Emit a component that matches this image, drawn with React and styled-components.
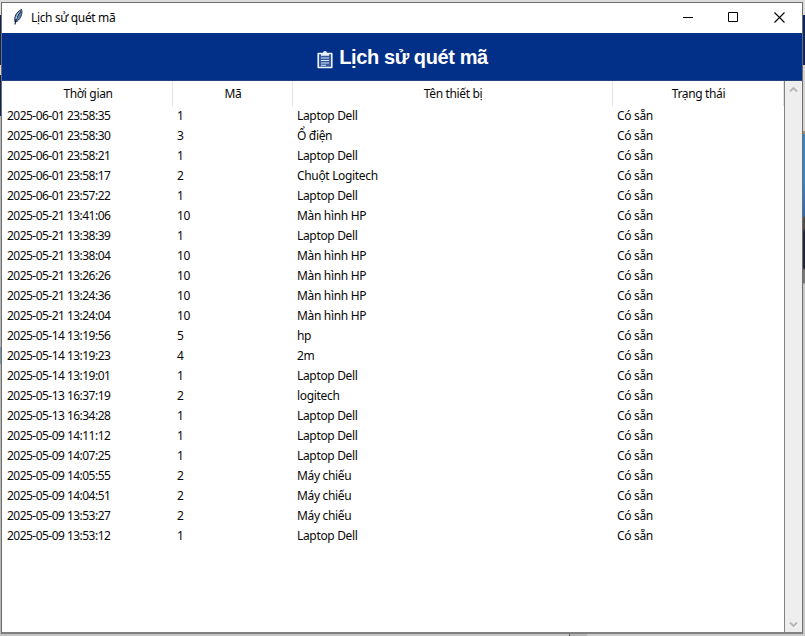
import React from 'react';
import styled, { createGlobalStyle } from 'styled-components';

const GlobalStyle = createGlobalStyle`
  * { box-sizing: border-box; }
  body { margin: 0; overflow: hidden; background: #cfcfcf; }
`;

const Desktop = styled.div`
  display: grid;
  grid-template-columns: 1px 802px 2px;
  grid-template-rows: 2px 632px 2px;
  width: 805px;
  height: 636px;
  font-family: 'Noto Sans', 'Open Sans', sans-serif;
  font-size: 12px;
  letter-spacing: -0.35px;
  color: #080808;
`;

const TopEdge = styled.div`
  grid-column: 1 / -1;
  background: #dcdcdc;
`;

const LeftEdge = styled.div`
  background: linear-gradient(#dcdcdc 0 13px, #0c2260 13px 63px, #d8d8d8 63px 73px, #0c2260 73px 114px, #b5b8bb 114px 345px, #7898aa 345px 362px, #b8b8b8 362px);
`;

const RightEdge = styled.div`
  background: linear-gradient(#dcdcdc 0 13px, #0c2668 13px 63px, #d6d4cf 63px 129px, #a58d6c 129px 132px, #3a86c4 132px 180px, #2b6ba6 214px, #514c48 216px 226px, #20263a 230px 266px, #777 268px 281px, #c8c8c8 282px);
`;

const BottomEdge = styled.div`
  grid-column: 1 / -1;
  background: linear-gradient(90deg, #c4c4c4 0 569px, #555 569px 570px, #b4b4b4 570px 587px, #cbcbcb 587px);
`;

const Window = styled.main`
  display: flex;
  flex-direction: column;
  background: #fff;
  border: 1px solid #6e6e6e;
  border-bottom: 2px solid #818181;
`;

const TitleBar = styled.header`
  display: flex;
  align-items: center;
  height: 30px;
  flex: none;
  padding: 0 0 2px 10px;
`;

const WindowTitle = styled.span`
  margin-left: 6px;
  flex: 1;
`;

const WindowButton = styled.button`
  display: grid;
  place-items: center;
  width: 45.5px;
  height: 28px;
  padding: 0;
  border: 0;
  background: none;
`;

const Banner = styled.div`
  display: flex;
  align-items: center;
  justify-content: center;
  gap: 6px;
  flex: none;
  height: 48px;
  padding-left: 1px;
  background: #023088;
  border-bottom: 1px solid #26427b;
`;

const BannerIcon = styled.svg`
  margin-top: 5px;
`;

const BannerTitle = styled.h1`
  margin: 0;
  color: #fff;
  font: bold 20px/24px 'Liberation Sans', sans-serif;
  letter-spacing: -0.4px;
`;

const Content = styled.div`
  display: flex;
  flex: 1;
  min-height: 0;
`;

const Table = styled.section`
  flex: 1;
  padding-left: 1px;
  border-right: 1px solid #828282;
`;

const columns = '170px 120px 320px 1fr';

const HeaderRow = styled.div`
  display: grid;
  grid-template-columns: ${columns};
  height: 25px;
`;

const HeaderCell = styled.div`
  border-right: 1px solid #e4e4e4;
  padding-left: 1px;
  text-align: center;
  line-height: 25px;
`;

const Row = styled.div`
  display: grid;
  grid-template-columns: ${columns};
  height: 20px;
  line-height: 20px;
`;

const Cell = styled.div`
  padding-left: 4px;
  white-space: nowrap;
  letter-spacing: ${(p) => p.$spacing || '-0.33px'};
`;

const ScrollBar = styled.div`
  display: flex;
  flex-direction: column;
  align-items: center;
  justify-content: space-between;
  width: 17px;
  padding: 5px 0 4px;
  background: #eee;
`;

const rows = [
  ['2025-06-01 23:58:35', '1', 'Laptop Dell'],
  ['2025-06-01 23:58:30', '3', 'Ổ điện'],
  ['2025-06-01 23:58:21', '1', 'Laptop Dell'],
  ['2025-06-01 23:58:17', '2', 'Chuột Logitech'],
  ['2025-06-01 23:57:22', '1', 'Laptop Dell'],
  ['2025-05-21 13:41:06', '10', 'Màn hình HP'],
  ['2025-05-21 13:38:39', '1', 'Laptop Dell'],
  ['2025-05-21 13:38:04', '10', 'Màn hình HP'],
  ['2025-05-21 13:26:26', '10', 'Màn hình HP'],
  ['2025-05-21 13:24:36', '10', 'Màn hình HP'],
  ['2025-05-21 13:24:04', '10', 'Màn hình HP'],
  ['2025-05-14 13:19:56', '5', 'hp'],
  ['2025-05-14 13:19:23', '4', '2m'],
  ['2025-05-14 13:19:01', '1', 'Laptop Dell'],
  ['2025-05-13 16:37:19', '2', 'logitech'],
  ['2025-05-13 16:34:28', '1', 'Laptop Dell'],
  ['2025-05-09 14:11:12', '1', 'Laptop Dell'],
  ['2025-05-09 14:07:25', '1', 'Laptop Dell'],
  ['2025-05-09 14:05:55', '2', 'Máy chiếu'],
  ['2025-05-09 14:04:51', '2', 'Máy chiếu'],
  ['2025-05-09 13:53:27', '2', 'Máy chiếu'],
  ['2025-05-09 13:53:12', '1', 'Laptop Dell'],
];

const Feather = () => (
  <svg width="13" height="18" viewBox="0 0 13 18">
    <path d="M3 14C2 9 4 4 9.500 1.500c1 3 0 7.500-3 10.500-1 1-2 2-3.500 2Z" fill="#5d85b5" stroke="#202d42" strokeWidth="1" />
    <path d="M8.500 3.500C6 6 4 10 3 16.500" fill="none" stroke="#15202e" strokeWidth="1.200" />
    <path d="M8 3.500C6 5 4.500 8 4 11" fill="none" stroke="#c6def4" strokeWidth="1" />
  </svg>
);

const Clipboard = () => (
  <BannerIcon width="16" height="19" viewBox="0 0 16 19">
    <path d="M1.200 3.500h13.600v14H1.200z" fill="#35599c" stroke="#e9f1fb" strokeWidth="1.6" strokeLinejoin="round" />
    <path d="M4 5.800V3h2a2 2 0 0 1 4 0h2v2.800z" fill="#e9f1fb" />
    <path d="M4 8h8M4 10.500h8M4 13h8M4 15.300h5" stroke="#d6e5f8" strokeWidth="1.100" />
  </BannerIcon>
);

const Chevron = ({ d }) => (
  <svg width="9" height="7" viewBox="0 0 9 7">
    <path d={d} fill="none" stroke="#b6b6b6" strokeWidth="1.8" />
  </svg>
);

export default function App() {
  return (
    <>
      <GlobalStyle />
      <Desktop>
        <TopEdge />
        <LeftEdge />
        <Window>
          <TitleBar>
            <Feather />
            <WindowTitle>Lịch sử quét mã</WindowTitle>
            <WindowButton aria-label="Minimize">
              <svg width="11" height="11"><path d="M0 5.500h10" stroke="#000" /></svg>
            </WindowButton>
            <WindowButton aria-label="Maximize">
              <svg width="11" height="11"><path d="M.5.5h9v9h-9z" fill="none" stroke="#000" /></svg>
            </WindowButton>
            <WindowButton aria-label="Close">
              <svg width="11" height="11"><path d="M.5.5l10 10m0-10l-10 10" stroke="#000" strokeWidth="1.100" /></svg>
            </WindowButton>
          </TitleBar>
          <Banner>
            <Clipboard />
            <BannerTitle>Lịch sử quét mã</BannerTitle>
          </Banner>
          <Content>
            <Table>
              <HeaderRow>
                <HeaderCell>Thời gian</HeaderCell>
                <HeaderCell>Mã</HeaderCell>
                <HeaderCell>Tên thiết bị</HeaderCell>
                <HeaderCell>Trạng thái</HeaderCell>
              </HeaderRow>
              {rows.map(([time, code, device]) => (
                <Row key={time}>
                  <Cell $spacing="-0.53px">{time}</Cell>
                  <Cell>{code}</Cell>
                  <Cell>{device}</Cell>
                  <Cell>Có sẵn</Cell>
                </Row>
              ))}
            </Table>
            <ScrollBar>
              <Chevron d="M1 5.500l3.500-3.500L8 5.500" />
              <Chevron d="M1 1.500L4.500 5 8 1.500" />
            </ScrollBar>
          </Content>
        </Window>
        <RightEdge />
        <BottomEdge />
      </Desktop>
    </>
  );
}
